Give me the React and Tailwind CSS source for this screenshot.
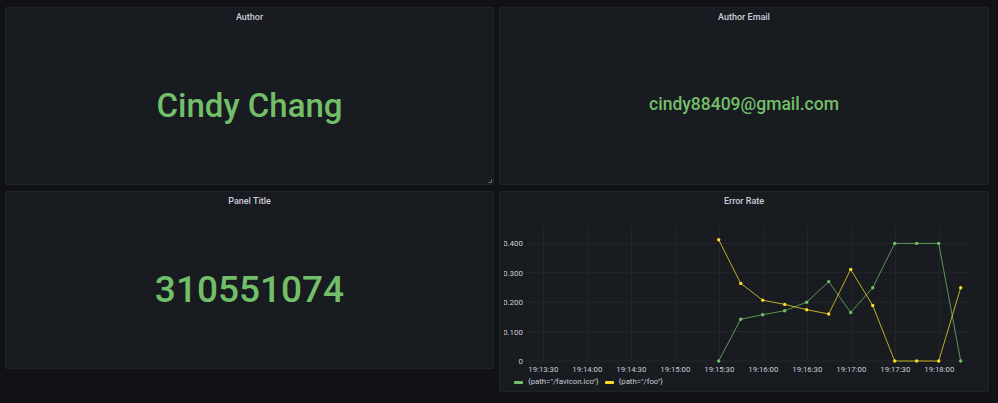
const FONT = { fontFamily: 'Roboto, "Liberation Sans", sans-serif' }

const green = [0, 0.142, 0.1575, 0.171, 0.2, 0.27, 0.165, 0.249, 0.4, 0.4, 0.4, 0]
const yellow = [0.4125, 0.264, 0.207, 0.1925, 0.1745, 0.16, 0.3115, 0.189, 0, 0, 0, 0.249]
const times = ['19:13:30', '19:14:00', '19:14:30', '19:15:00', '19:15:30', '19:16:00', '19:16:30', '19:17:00', '19:17:30', '19:18:00']
const ticks = [0, 0.1, 0.2, 0.3, 0.4]

const px = (i) => 218.7 + 22 * i
const py = (v) => 150 - 294 * v

function Panel({ title, className = '', children }) {
  return (
    <div className={`relative flex flex-col rounded-[2px] border border-[#202328] bg-[#181b1f] ${className}`}>
      <div className="flex h-[19px] shrink-0 items-center justify-center text-[9px] font-medium leading-none text-[#ccccdc]">
        {title}
      </div>
      {children}
    </div>
  )
}

function Series({ data, color }) {
  const pts = data.map((v, i) => `${px(i)},${py(v)}`).join(' ')
  return (
    <g>
      <polyline points={pts} fill="none" stroke={color} strokeWidth="1" strokeOpacity="0.75" />
      {data.map((v, i) => (
        <circle key={i} cx={px(i)} cy={py(v)} r="1.7" fill={color} />
      ))}
    </g>
  )
}

function ErrorChart() {
  return (
    <svg width="488" height="165" className="block shrink-0">
      <defs>
        <clipPath id="ylab">
          <rect x="4" y="0" width="30" height="165" />
        </clipPath>
      </defs>
      {ticks.map((t) => (
        <line key={t} x1="27" x2="468" y1={py(t)} y2={py(t)} stroke="#25272c" strokeWidth="1" />
      ))}
      {times.map((t, k) => (
        <line key={t} x1={43.3 + 44 * k} x2={43.3 + 44 * k} y1="14.7" y2="150" stroke="#25272c" strokeWidth="1" />
      ))}
      <g clipPath="url(#ylab)" fill="#ccccdc" fontSize="8" textAnchor="end" style={FONT}>
        {ticks.map((t) => (
          <text key={t} x="23" y={py(t) + 3}>
            {t === 0 ? '0' : t.toFixed(3)}
          </text>
        ))}
      </g>
      <g fill="#ccccdc" fontSize="7.8" textAnchor="middle" style={FONT}>
        {times.map((t, k) => (
          <text key={t} x={43.3 + 44 * k} y="161">
            {t}
          </text>
        ))}
      </g>
      <Series data={green} color="#73bf69" />
      <Series data={yellow} color="#fade2a" />
    </svg>
  )
}

export default function App() {
  return (
    <div className="h-[403px] overflow-hidden bg-[#111217] pl-[5px] pt-[7px]" style={FONT}>
      <div className="grid grid-cols-[489px_490px] items-start gap-x-[5px] gap-y-[6px]">
        <Panel title="Author" className="h-[178px]">
          <div className="flex flex-1 items-center justify-center pb-[1px] text-[33px] font-medium leading-none text-[#73bf69]">
            Cindy Chang
          </div>
          <svg width="4" height="4" className="absolute bottom-[1px] right-[1px]">
            <path d="M3.5 0.5 V3.5 H0.5" fill="none" stroke="#6e7079" strokeWidth="1" />
          </svg>
        </Panel>
        <Panel title="Author Email" className="h-[178px]">
          <div className="flex flex-1 items-center justify-center pb-[1px] text-[17.5px] font-medium leading-none text-[#73bf69]">
            cindy88409@gmail.com
          </div>
        </Panel>
        <Panel title="Panel Title" className="h-[178px]">
          <div className="flex flex-1 items-center justify-center text-[37px] font-medium leading-none text-[#73bf69]">
            310551074
          </div>
        </Panel>
        <Panel title="Error Rate" className="h-[201px]">
          <ErrorChart />
          <div className="flex h-[12px] items-center pl-[14px] text-[7.8px] leading-none text-[#ccccdc]">
            <span className="mr-[5px] h-[3px] w-[9px] rounded-[1px] bg-[#73bf69]" />
            <span className="mr-[6px]">{'{path="/favicon.ico"}'}</span>
            <span className="mr-[5px] h-[3px] w-[9px] rounded-[1px] bg-[#fade2a]" />
            <span>{'{path="/foo"}'}</span>
          </div>
        </Panel>
      </div>
    </div>
  )
}
